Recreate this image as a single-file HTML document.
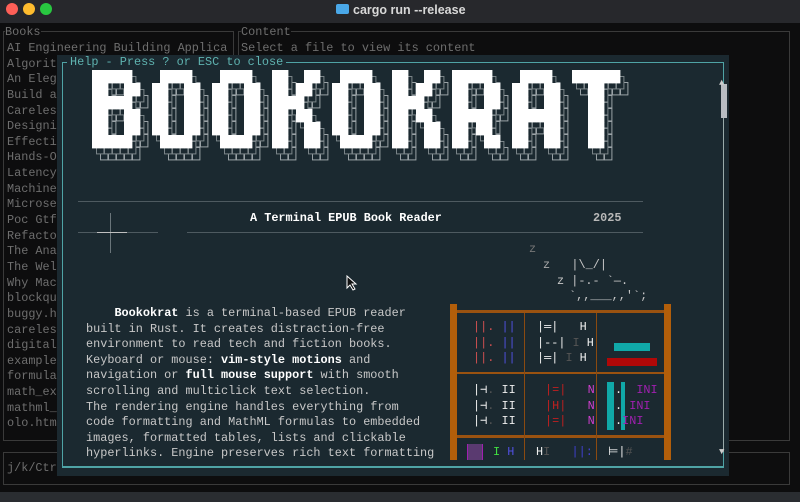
<!DOCTYPE html>
<html><head><meta charset="utf-8"><style>
*{margin:0;padding:0;box-sizing:border-box}
body{width:800px;height:502px;background:#0d0d0e;overflow:hidden;position:relative;font-family:"Liberation Mono",monospace;font-size:11.85px}
.tb{position:absolute;left:0;top:0;width:800px;height:23px;background:#27282c}
.dot{position:absolute;top:3px;width:12px;height:12px;border-radius:50%}
.t{position:absolute;white-space:pre;line-height:15px}
.g{color:#6e6e6e}
.pop{position:absolute;left:57px;top:55px;width:672px;height:421px;background:#1b2930}
.bd{position:absolute;border:1px solid #4a4d52}
.w{color:#c8c8c8}
.b{color:#fff;font-weight:bold}
</style></head><body>
<div class="tb">
<div class="dot" style="left:6px;background:#fe5f57"></div>
<div class="dot" style="left:23px;background:#febc2e"></div>
<div class="dot" style="left:40px;background:#28c840"></div>
<div style="position:absolute;left:336px;top:4px;width:13px;height:10px;background:#4aa8e8;border-radius:2px"></div>
<div style="position:absolute;left:353px;top:3px;color:#d8d8d8;font:bold 12.5px 'Liberation Sans',sans-serif">cargo run --release</div>
</div>
<div style="position:absolute;left:0;top:492px;width:800px;height:10px;background:#2a2d31"></div>
<div class="bd" style="left:3px;top:31px;width:231px;height:410px;border-color:#3a3a3a"></div>
<div class="bd" style="left:238px;top:31px;width:552px;height:410px;border-color:#3a3a3a"></div>
<div class="bd" style="left:3px;top:452px;width:787px;height:33px;border-color:#3a3a3a"></div>
<div class="t g" style="left:5px;top:25px;background:#0d0d0e">Books</div>
<div class="t g" style="left:241px;top:25px;background:#0d0d0e">Content</div>
<div class="t g" style="left:241px;top:41px">Select a file to view its content</div>
<div class="t g" style="left:7px;top:461px">j/k/Ctr</div>
<div class="t g" style="left:7px;top:41px;line-height:15.64px">AI Engineering Building Applica
Algorit
An Eleg
Build a
Careles
Designi
Effecti
Hands-O
Latency
Machine
Microse
Poc Gtf
Refacto
The Ana
The Wel
Why Mac
blockqu
buggy.h
careles
digital
example
formula
math_ex
mathml_
olo.htm</div>

<div class="pop">
<div style="position:absolute;left:5px;top:7px;width:662px;height:406px;border:1px solid #4fa3a5;border-bottom-width:2px"></div>
<div class="t" style="left:10px;top:0px;color:#5fb3b0;background:#1b2930;padding:0 3px">Help - Press ? or ESC to close</div>
<svg id="logo" width="610" height="105" style="position:absolute;left:30px;top:12px"></svg>
<div style="position:absolute;left:21px;top:146px;width:565px;height:1px;background:#4e5a60"></div>
<div style="position:absolute;left:130px;top:177px;width:456px;height:1px;background:#4e5a60"></div>
<div style="position:absolute;left:21px;top:177px;width:80px;height:1px;background:#4e5a60"></div>
<div style="position:absolute;left:53px;top:158px;width:1px;height:40px;background:#6a757a"></div>
<div style="position:absolute;left:40px;top:177px;width:30px;height:1px;background:#c0c0c0"></div>
<div class="t b" style="left:193px;top:156px">A Terminal EPUB Book Reader</div>
<div class="t" style="left:536px;top:156px;color:#b8b8b8;font-weight:bold">2025</div>
<div class="t" style="left:472px;top:187px;color:#777">z</div>
<div class="t w" style="left:486px;top:203px"><span style="color:#aaa">z</span>   |\_/|</div>
<div class="t w" style="left:500px;top:219px">z |-.- `—.</div>
<div class="t w" style="left:512px;top:234px">`,,___,,'`;</div>
<div class="t w" style="left:29px;top:251px;line-height:15.6px">    <span class="b">Bookokrat</span> is a terminal-based EPUB reader
built in Rust. It creates distraction-free
environment to read tech and fiction books.
Keyboard or mouse: <span class="b">vim-style motions</span> and
navigation or <span class="b">full mouse support</span> with smooth
scrolling and multiclick text selection.
The rendering engine handles everything from
code formatting and MathML formulas to embedded
images, formatted tables, lists and clickable
hyperlinks. Engine preserves rich text formatting</div>
<!-- scrollbar -->
<div style="position:absolute;left:666px;top:32px;width:1px;height:365px;background:#9aa"></div>
<div style="position:absolute;left:664px;top:29px;width:6px;height:34px;background:#b8bcc2"></div>
<div class="t" style="left:662px;top:21px;color:#ccc;font-size:9px">▲</div>
<div class="t" style="left:662px;top:390px;color:#ccc;font-size:9px">▼</div>
<!-- shelf -->
<div style="position:absolute;left:393px;top:249px;width:7px;height:156px;background:#b25e0a"></div>
<div style="position:absolute;left:607px;top:249px;width:7px;height:156px;background:#b25e0a"></div>
<div style="position:absolute;left:400px;top:255px;width:207px;height:3px;background:#9a5210"></div>
<div style="position:absolute;left:400px;top:317px;width:207px;height:2px;background:#9a5210"></div>
<div style="position:absolute;left:400px;top:380px;width:207px;height:3px;background:#9a5210"></div>
<div style="position:absolute;left:467px;top:258px;width:1px;height:147px;background:#8a4a10"></div>
<div style="position:absolute;left:539px;top:258px;width:1px;height:147px;background:#8a4a10"></div>
<div class="t" style="left:416px;top:265px;line-height:15.6px"><span style="color:#d05050">||.</span> <span style="color:#5050e0">||</span>
<span style="color:#d05050">||.</span> <span style="color:#5050e0">||</span>
<span style="color:#d05050">||.</span> <span style="color:#5050e0">||</span></div>
<div class="t" style="left:480px;top:265px;line-height:15.6px;color:#eee">|═|   H
|--| <span style="color:#555">I</span> H
|═| <span style="color:#555">I</span> H</div>
<div style="position:absolute;left:557px;top:288px;width:36px;height:8px;background:#10a8a8"></div>
<div style="position:absolute;left:550px;top:303px;width:50px;height:8px;background:#b00808"></div>
<div class="t" style="left:416px;top:328px;line-height:15.6px;color:#eee">|⊣<span style="color:#555">.</span> II
|⊣<span style="color:#555">.</span> II
|⊣<span style="color:#555">.</span> II</div>
<div class="t" style="left:488px;top:328px;line-height:15.6px"><span style="color:#c02020">|=|</span>   <span style="color:#d040d0">N</span>
<span style="color:#c02020">|H|</span>   <span style="color:#d040d0">N</span>
<span style="color:#c02020">|=|</span>   <span style="color:#d040d0">N</span></div>
<div style="position:absolute;left:550px;top:327px;width:7px;height:48px;background:#10a8a8"></div>
<div style="position:absolute;left:564px;top:327px;width:4px;height:48px;background:#10a8a8"></div>
<div class="t" style="left:558px;top:328px;line-height:15.6px;color:#eee">.  <span style="color:#a020b0">INI</span>
. <span style="color:#a020b0">INI</span>
.<span style="color:#a020b0">INI</span></div>
<div style="position:absolute;left:410px;top:389px;width:16px;height:16px;border-left:1px solid #a020b0;border-right:1px solid #a020b0;background:#5a3a70"></div>
<div class="t" style="left:436px;top:390px"><span style="color:#40e040">I</span> <span style="color:#5050e0">H</span></div>
<div class="t" style="left:479px;top:390px;color:#eee">H<span style="color:#555">I</span>   <span style="color:#4040d0">||:</span></div>
<div class="t" style="left:551px;top:390px;color:#eee">⊨|<span style="color:#555">#</span></div>
</div>
<svg width="12" height="16" style="position:absolute;left:346px;top:275px"><path d="M1 1 L1 13 L4 10 L7 15 L9 14 L6 9 L10 9 Z" fill="#111" stroke="#fff" stroke-width="1"/></svg>
<script>
const L={B:["11111.","11..11","11111.","11..11","11..11","11111."],
O:[".1111.","11..11","11..11","11..11","11..11",".1111."],
K:["11..11","11.11.","1111..","11.11.","11..11","11..11"],
R:["11111.","11..11","11..11","11111.","11.11.","11..11"],
A:[".1111.","11..11","11..11","111111","11..11","11..11"],
T:["111111","..11..","..11..","..11..","..11..","..11.."]};
const s="BOOKOKRAT";let g="",h="",g2="",h2="",f="";
for(let i=0;i<s.length;i++){const m=L[s[i]];for(let r=0;r<6;r++)for(let c=0;c<6;c++)if(m[r][c]=="1"){
const x=5+i*60+c*8,y=3+r*13;
g+=`<rect x="${x+8}" y="${y+12}" width="8.4" height="13.4" fill="#9aa2a6"/>`;
h+=`<rect x="${x+9}" y="${y+13}" width="6.4" height="11.4" fill="#1b2930"/>`;
g2+=`<rect x="${x+4}" y="${y+6}" width="8.4" height="13.4" fill="#7a8488"/>`;
h2+=`<rect x="${x+5}" y="${y+7}" width="6.4" height="11.4" fill="#1b2930"/>`;
f+=`<rect x="${x}" y="${y}" width="8.4" height="13.4" fill="#fff"/>`;}}
document.getElementById("logo").innerHTML=g+h+g2+h2+f;
</script>
</body></html>
